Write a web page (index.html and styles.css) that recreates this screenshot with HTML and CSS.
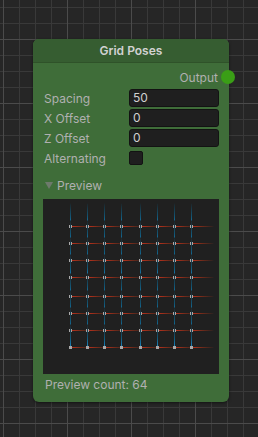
FILE: index.html
```html
<!DOCTYPE html>
<html lang="en">
<head>
  <meta charset="UTF-8" />
  <meta name="viewport" content="width=device-width, initial-scale=1.0" />
  <title>Grid Poses</title>
  <link rel="stylesheet" href="styles.css">
</head>
<body>
  <!-- Lienzo del grafo -->
  <div class="canvas">
    <!-- Nodo: Grid Poses -->
    <section class="node">
      <header class="node-title">Grid Poses</header>

      <div class="node-body">
        <div class="output-row">
          <span>Output</span>
          <span class="port"></span>
        </div>

        <div class="field-row">
          <label>Spacing</label>
          <div class="field">50</div>
        </div>
        <div class="field-row">
          <label>X Offset</label>
          <div class="field">0</div>
        </div>
        <div class="field-row">
          <label>Z Offset</label>
          <div class="field">0</div>
        </div>
        <div class="field-row">
          <label>Alternating</label>
          <div class="checkbox"></div>
        </div>

        <div class="foldout">
          <svg class="foldout-arrow" width="8" height="8" viewBox="0 0 8 8">
            <polygon points="0,1 8,1 4,8" fill="#6e7a6c" />
          </svg>
          <span>Preview</span>
        </div>

        <!-- Vista previa de las poses -->
        <div class="preview">
          <svg width="176" height="175" viewBox="0 0 176 175">
            <defs>
              <linearGradient id="up" x1="0" y1="1" x2="0" y2="0">
                <stop offset="0" stop-color="#1a88c6" />
                <stop offset="0.4" stop-color="#135878" />
                <stop offset="1" stop-color="#1d2528" />
              </linearGradient>
              <linearGradient id="right" x1="0" y1="0" x2="1" y2="0">
                <stop offset="0" stop-color="#c4321c" />
                <stop offset="0.5" stop-color="#6e2a1a" />
                <stop offset="1" stop-color="#2a2220" />
              </linearGradient>
              <g id="cell">
                <rect x="-0.5" y="-23" width="1" height="23" fill="url(#up)" />
                <rect x="0" y="-0.5" width="22" height="1" fill="url(#right)" />
              </g>
              <g id="dot">
                <rect x="-1.5" y="-1.5" width="3" height="3" fill="#a8a8a8" />
              </g>
              <g id="row">
                <use href="#cell" x="27.5" />
                <use href="#cell" x="44.5" />
                <use href="#cell" x="61.5" />
                <use href="#cell" x="78.5" />
                <use href="#cell" x="97.5" />
                <use href="#cell" x="114.5" />
                <use href="#cell" x="131.5" />
                <use href="#cell" x="148.5" />
                <use href="#dot" x="27.5" />
                <use href="#dot" x="44.5" />
                <use href="#dot" x="61.5" />
                <use href="#dot" x="78.5" />
                <use href="#dot" x="97.5" />
                <use href="#dot" x="114.5" />
                <use href="#dot" x="131.5" />
                <use href="#dot" x="148.5" />
              </g>
            </defs>
            <use href="#row" y="27.5" />
            <use href="#row" y="44.5" />
            <use href="#row" y="61.5" />
            <use href="#row" y="78.5" />
            <use href="#row" y="97.5" />
            <use href="#row" y="114.5" />
            <use href="#row" y="131.5" />
            <use href="#row" y="148.5" />
          </svg>
        </div>

        <p class="preview-count">Preview count: 64</p>
      </div>
    </section>
  </div>
</body>
</html>
```

FILE: styles.css
```css
/*
 ===========================
 Variables y reset
 ===========================
*/
:root {
  --canvas-bg: #262626;
  --grid-minor: #393939;
  --grid-major: #4b4b4b;
  --node-body: #3f6d39;
  --node-header: #365d31;
  --text-title: #d2d2d2;
  --text-label: #b0b0b0;
  --field-bg: #1f1f1f;
  --field-border: #131313;
  --port: #3a9e16;
  --font-base: 'Inter', 'Noto Sans', sans-serif;
}

* {
  margin: 0;
  padding: 0;
  box-sizing: border-box;
}

body {
  width: 258px;
  height: 437px;
  overflow: hidden;
  font-family: var(--font-base);
  font-size: 12px;
  background-color: var(--canvas-bg);
}

/*
 ===========================
 Lienzo con cuadrícula
 ===========================
*/
.canvas {
  position: relative;
  width: 258px;
  height: 437px;
  background-color: var(--canvas-bg);
  background-image:
    linear-gradient(to right, var(--grid-major) 0 1px, transparent 1px 100%),
    linear-gradient(to bottom, var(--grid-major) 0 1px, transparent 1px 100%),
    linear-gradient(to right, var(--grid-minor) 0 1px, transparent 1px 100%),
    linear-gradient(to bottom, var(--grid-minor) 0 1px, transparent 1px 100%);
  background-size: 64px 64px, 64px 64px, 16px 16px, 16px 16px;
  background-position: 3px 0, 0 39px, 3px 0, 0 7px;
}

/*
 ===========================
 Nodo
 ===========================
*/
.node {
  position: absolute;
  left: 33px;
  top: 39px;
  width: 196px;
  height: 363px;
  border-radius: 6px;
  background-color: var(--node-body);
  box-shadow: 0 1px 3px rgba(0, 0, 0, 0.5);
}

.node-title {
  height: 24px;
  line-height: 24px;
  text-align: center;
  font-weight: 600;
  color: var(--text-title);
  background-color: var(--node-header);
  border-radius: 6px 6px 0 0;
  border-bottom: 1px solid #2f5229;
}

.node-body {
  padding: 5px 10px 0 10px;
  color: var(--text-label);
}

.output-row {
  position: relative;
  height: 18px;
  display: flex;
  justify-content: flex-end;
  align-items: center;
  padding-right: 1px;
}

.port {
  position: absolute;
  right: -16px;
  top: 2px;
  width: 14px;
  height: 14px;
  border-radius: 50%;
  background-color: var(--port);
}

.field-row {
  height: 20px;
  display: flex;
  align-items: center;
  padding-left: 1px;
}

.output-row + .field-row {
  margin-top: 2px;
}

.field-row label {
  width: 85px;
}

.field {
  flex: 1;
  height: 18px;
  line-height: 16px;
  padding-left: 3px;
  color: #d0d0d0;
  background-color: var(--field-bg);
  border: 1px solid var(--field-border);
  border-radius: 3px;
}

.checkbox {
  width: 14px;
  height: 14px;
  background-color: var(--field-bg);
  border: 1px solid var(--field-border);
  border-radius: 2px;
}

/*
 ===========================
 Vista previa
 ===========================
*/
.foldout {
  height: 18px;
  margin-top: 8px;
  display: flex;
  align-items: center;
  gap: 4px;
  padding-left: 2px;
}

.preview {
  margin-top: 5px;
  width: 176px;
  height: 175px;
  background-color: #202020;
}

.preview svg {
  display: block;
}

.preview-count {
  margin-top: 3px;
  height: 16px;
  line-height: 16px;
  padding-left: 2px;
}
```
